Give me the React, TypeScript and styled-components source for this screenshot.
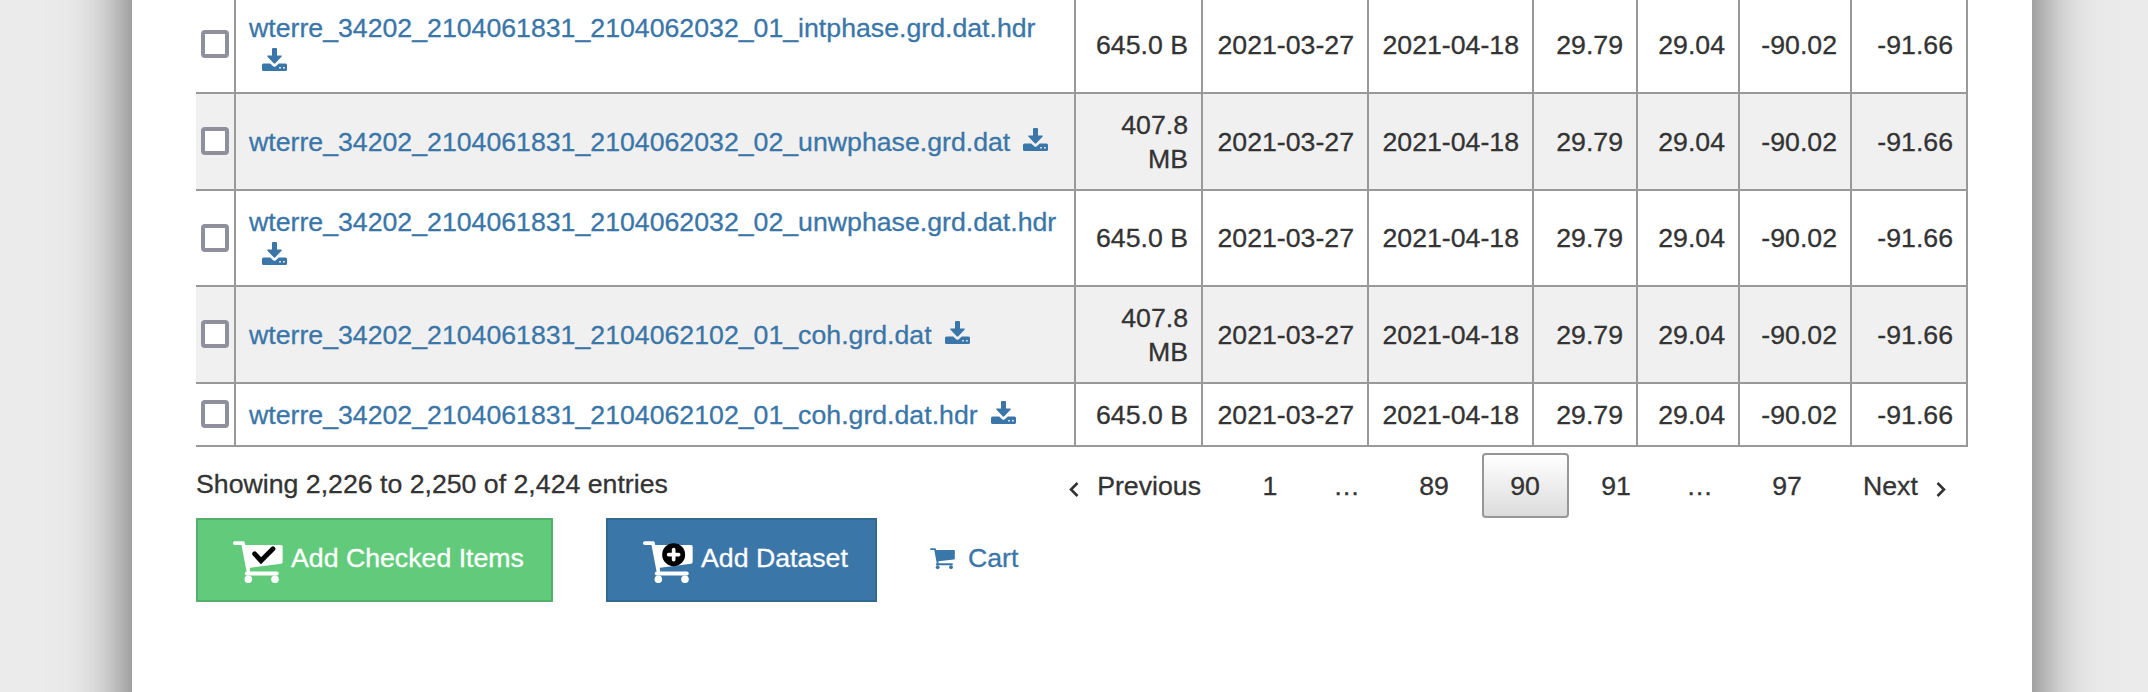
import React from 'react';
import styled, { createGlobalStyle, css } from 'styled-components';

const GlobalStyle = createGlobalStyle`
  *, *::before, *::after { box-sizing: border-box; }
  body {
    margin: 0;
    background: #ebebeb;
    color: #333;
    font-family: "Liberation Sans", Arial, Helvetica, sans-serif;
    font-size: 26.7px;
    line-height: 34px;
    -webkit-text-stroke: 0.3px currentColor;
  }
`;

const Viewport = styled.div`
  height: 692px;
  overflow: hidden;
`;

const Page = styled.main`
  width: 1900px;
  height: 892px;
  margin: -100px 0 0 132px;
  padding: 97px 64px 0;
  background: #fff;
  box-shadow: 0 0 60px #555;
`;

const Table = styled.table`
  width: 1772px;
  table-layout: fixed;
  border-collapse: separate;
  border-spacing: 0;
`;

const Col = styled.col<{ $w: number }>`
  width: ${(p) => p.$w}px;
`;

const Row = styled.tr<{ $h: number; $shaded: boolean }>`
  height: ${(p) => p.$h}px;
  background: ${(p) => (p.$shaded ? '#f0f0f0' : '#fff')};
`;

const Cell = styled.td<{ $align?: 'left' | 'right' }>`
  padding: 0 13px 0 12px;
  border-right: 2px solid #999;
  border-bottom: 2px solid #999;
  text-align: ${(p) => p.$align ?? 'right'};
  vertical-align: middle;
`;

const CheckCell = styled(Cell)`
  padding: 0 5px;
`;

const NameCell = styled(Cell)`
  padding: 1px 10px 0 13px;
`;

const Checkbox = styled.input`
  appearance: none;
  display: block;
  width: 28px;
  height: 28px;
  margin: 0 0 1px;
  border: 4px solid #8f8f9d;
  border-radius: 4px;
  background: #fff;
`;

const FileLink = styled.a`
  color: #3a76a8;
  text-decoration: none;
`;

const DownloadLink = styled(FileLink)`
  display: inline-block;
  height: 23px;
  padding-left: 13px;
  line-height: 0;
`;

const Footer = styled.div`
  display: flex;
  justify-content: space-between;
  height: 71px;
`;

const Info = styled.div`
  padding-top: 20px;
`;

const Pager = styled.nav`
  display: flex;
  gap: 4px;
  padding-top: 6px;
`;

const PageItem = styled.a<{ $w: number; $current?: boolean }>`
  display: flex;
  align-items: center;
  justify-content: center;
  width: ${(p) => p.$w}px;
  height: 65px;
  padding-right: 1px;
  border: 2px solid transparent;
  border-radius: 4px;
  color: #333;
  ${(p) =>
    p.$current &&
    css`
      border-color: #979797;
      background: linear-gradient(#fff, #dcdcdc);
    `}
`;

const Ellipsis = styled(PageItem)`
  padding-right: 5px;
`;

const PreviousItem = styled(PageItem)`
  justify-content: flex-end;
  gap: 18px;
  padding-right: 27px;
`;

const NextItem = styled(PageItem)`
  justify-content: flex-start;
  gap: 18px;
  padding-left: 26px;
`;

const Chevron = styled.svg`
  width: 10px;
  height: 15px;
  margin-top: 8px;
  flex: none;
`;

const Actions = styled.div`
  display: flex;
  align-items: flex-start;
`;

const Button = styled.button<{ $tone: 'green' | 'blue'; $w: number }>`
  display: flex;
  align-items: flex-start;
  width: ${(p) => p.$w}px;
  height: 84px;
  margin: 0 53px 0 0;
  padding: 21px 0 0 35px;
  gap: 8px;
  border: 2px solid ${(p) => (p.$tone === 'green' ? '#55ae6b' : '#336891')};
  background: ${(p) => (p.$tone === 'green' ? '#62cb7b' : '#3b76a8')};
  color: #fff;
  font: inherit;
  white-space: nowrap;
`;

const CartLink = styled(FileLink)`
  display: flex;
  gap: 13px;
  padding-top: 23px;
`;

const CartLinkIcon = styled.span`
  display: flex;
  padding-top: 7px;
`;

const CartShape = () => (
  <>
    <path d="M165.500 128.500H190L206 212" fill="none" stroke="currentColor" strokeWidth="11" strokeLinecap="round" strokeLinejoin="round" />
    <path d="M191 134H304Q309 134 309 139V185Q309 190 304 190.500L211 202L204 213Z" fill="currentColor" />
    <path d="M201 219.500H291.500" stroke="currentColor" strokeWidth="11.500" strokeLinecap="round" />
    <circle cx="206" cy="237" r="11.300" fill="currentColor" />
    <circle cx="286" cy="237" r="11.300" fill="currentColor" />
  </>
);

const CartIcon = ({ width, badge }: { width: number; badge?: 'check' | 'plus' }) => (
  <svg width={width} height={(width * 127) / 150} viewBox="160 122 150 127" aria-hidden="true">
    <CartShape />
    {badge === 'check' && (
      <path d="M225 160.500L244 181L280 145.500" fill="none" stroke="#000" strokeWidth="14.500" strokeLinecap="round" />
    )}
    {badge === 'plus' && (
      <>
        <circle cx="252" cy="163" r="34.500" fill="#000" />
        <path d="M237 163H267M252 148V178" stroke="#fff" strokeWidth="11" strokeLinecap="round" />
      </>
    )}
  </svg>
);

const DownloadIcon = () => (
  <svg width="25" height="23" viewBox="0 0 25 23" aria-hidden="true">
    <path
      fill="currentColor"
      fillRule="evenodd"
      d="M10 1Q10 0 11 0H14Q15 0 15 1V7.500H19Q20.600 7.500 19.500 8.700L13.300 15.300Q12.500 16.100 11.700 15.300L5.500 8.700Q4.400 7.500 6 7.500H10ZM1.500 15.500H8.200L11.200 18.200Q12.500 19.300 13.800 18.200L16.800 15.500H23.500Q25 15.500 25 17V21.500Q25 23 23.500 23H1.500Q0 23 0 21.500V17Q0 15.500 1.500 15.500ZM17.200 18.900V20.500H18.800V18.900ZM21.100 18.900V20.500H22.700V18.900Z"
    />
  </svg>
);

const columns = [40, 840, 127, 166, 165, 104, 102, 112, 116];

const files = [
  { name: 'wterre_34202_2104061831_2104062032_01_intphase.grd.dat.hdr', size: '645.0 B', height: 97 },
  { name: 'wterre_34202_2104061831_2104062032_02_unwphase.grd.dat', size: '407.8 MB', height: 97 },
  { name: 'wterre_34202_2104061831_2104062032_02_unwphase.grd.dat.hdr', size: '645.0 B', height: 96 },
  { name: 'wterre_34202_2104061831_2104062102_01_coh.grd.dat', size: '407.8 MB', height: 97 },
  { name: 'wterre_34202_2104061831_2104062102_01_coh.grd.dat.hdr', size: '645.0 B', height: 63 },
];

const extent = ['2021-03-27', '2021-04-18', '29.79', '29.04', '-90.02', '-91.66'];

export default function App() {
  return (
    <>
      <GlobalStyle />
      <Viewport>
        <Page>
          <Table>
            <colgroup>
              {columns.map((w, i) => (
                <Col key={i} $w={w} />
              ))}
            </colgroup>
            <tbody>
              {files.map((file, i) => (
                <Row key={file.name} $h={file.height} $shaded={i % 2 === 1}>
                  <CheckCell>
                    <Checkbox type="checkbox" aria-label={file.name} />
                  </CheckCell>
                  <NameCell $align="left">
                    <FileLink>{file.name}</FileLink>
                    <DownloadLink>
                      <DownloadIcon />
                    </DownloadLink>
                  </NameCell>
                  <Cell>{file.size}</Cell>
                  {extent.map((value) => (
                    <Cell key={value}>{value}</Cell>
                  ))}
                </Row>
              ))}
            </tbody>
          </Table>
          <Footer>
            <Info>Showing 2,226 to 2,250 of 2,424 entries</Info>
            <Pager>
              <PreviousItem $w={172}>
                <Chevron viewBox="0 0 10 15">
                  <path d="M8.500 1L2 7.500L8.500 14" fill="none" stroke="#333" strokeWidth="2.600" />
                </Chevron>
                Previous
              </PreviousItem>
              <PageItem $w={73}>1</PageItem>
              <Ellipsis $w={76}>…</Ellipsis>
              <PageItem $w={87}>89</PageItem>
              <PageItem $w={87} $current>90</PageItem>
              <PageItem $w={87}>91</PageItem>
              <Ellipsis $w={76}>…</Ellipsis>
              <PageItem $w={87}>97</PageItem>
              <NextItem $w={133}>
                Next
                <Chevron viewBox="0 0 10 15">
                  <path d="M1.500 1L8 7.500L1.500 14" fill="none" stroke="#333" strokeWidth="2.600" />
                </Chevron>
              </NextItem>
            </Pager>
          </Footer>
          <Actions>
            <Button $tone="green" $w={357}>
              <CartIcon width={50} badge="check" />
              Add Checked Items
            </Button>
            <Button $tone="blue" $w={271}>
              <CartIcon width={50} badge="plus" />
              Add Dataset
            </Button>
            <CartLink>
              <CartLinkIcon>
                <CartIcon width={25} />
              </CartLinkIcon>
              Cart
            </CartLink>
          </Actions>
        </Page>
      </Viewport>
    </>
  );
}
